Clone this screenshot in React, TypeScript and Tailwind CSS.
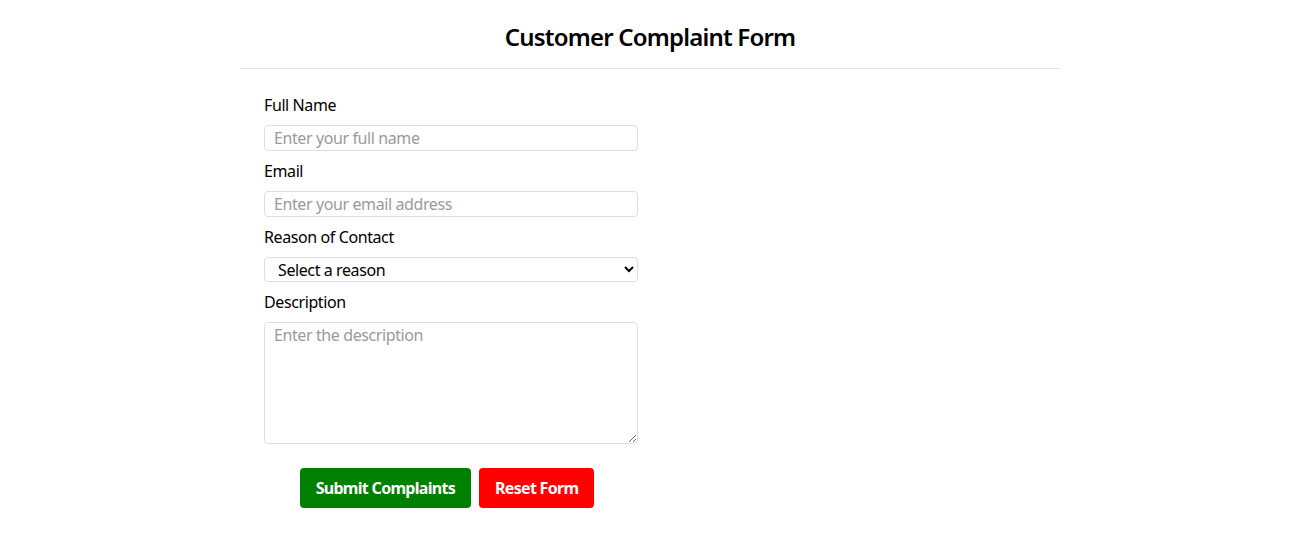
import { useState } from 'react';

export default function App() {
  const [name, setName] = useState('');
  const [email, setEmail] = useState('');
  const [reason, setReason] = useState('');
  const [description, setDescription] = useState('');

  const reset = () => {
    setName('');
    setEmail('');
    setReason('');
    setDescription('');
  };

  const labelCls = 'block text-[16px] leading-[24px] mb-2 tracking-[-0.4px]';
  const inputCls =
    'block w-[374px] h-[26px] rounded-[4px] border border-[#dedede] px-[9px] text-[16px] tracking-[-0.4px] text-black placeholder:text-[#9a9a9a] outline-none';

  return (
    <div className="min-h-screen bg-white font-['Noto_Sans',sans-serif] text-black">
      <div className="ml-[240px] w-[820px]">
        <div className="border-b border-[#e3e3e3] pt-[19px] pb-[13px] text-center">
          <h1 className="text-[24px] leading-[36px] font-semibold tracking-[-0.8px]">
            Customer Complaint Form
          </h1>
        </div>

        <form
          className="px-6 pt-6"
          onSubmit={(e) => {
            e.preventDefault();
          }}
        >
          <label className={labelCls}>Full Name</label>
          <input
            className={inputCls + ' mb-2'}
            placeholder="Enter your full name"
            value={name}
            onChange={(e) => setName(e.target.value)}
          />

          <label className={labelCls}>Email</label>
          <input
            className={inputCls + ' mb-2'}
            placeholder="Enter your email address"
            value={email}
            onChange={(e) => setEmail(e.target.value)}
          />

          <label className={labelCls}>Reason of Contact</label>
          <select
            className="block w-[374px] h-[25px] rounded-[4px] border border-[#dedede] pl-[9px] text-[16px] tracking-[-0.4px] mb-2 bg-white outline-none"
            value={reason}
            onChange={(e) => setReason(e.target.value)}
          >
            <option value="">Select a reason</option>
            <option value="product">Product Issue</option>
            <option value="service">Service Issue</option>
            <option value="billing">Billing</option>
            <option value="other">Other</option>
          </select>

          <label className={labelCls}>Description</label>
          <textarea
            className="block w-[374px] h-[122px] rounded-[4px] border border-[#dedede] px-[9px] py-0 text-[16px] tracking-[-0.4px] placeholder:text-[#9a9a9a] outline-none"
            placeholder="Enter the description"
            value={description}
            onChange={(e) => setDescription(e.target.value)}
          />

          <div className="mt-6 flex w-[374px] justify-center gap-2 pr-[8px]">
            <button
              type="submit"
              className="h-10 rounded-[4px] bg-[#008000] px-4 text-[16px] font-bold tracking-[-0.7px] text-white"
            >
              Submit Complaints
            </button>
            <button
              type="button"
              onClick={reset}
              className="h-10 rounded-[4px] bg-[#ff0000] px-4 text-[16px] font-bold tracking-[-0.7px] text-white"
            >
              Reset Form
            </button>
          </div>
        </form>
      </div>
    </div>
  );
}
